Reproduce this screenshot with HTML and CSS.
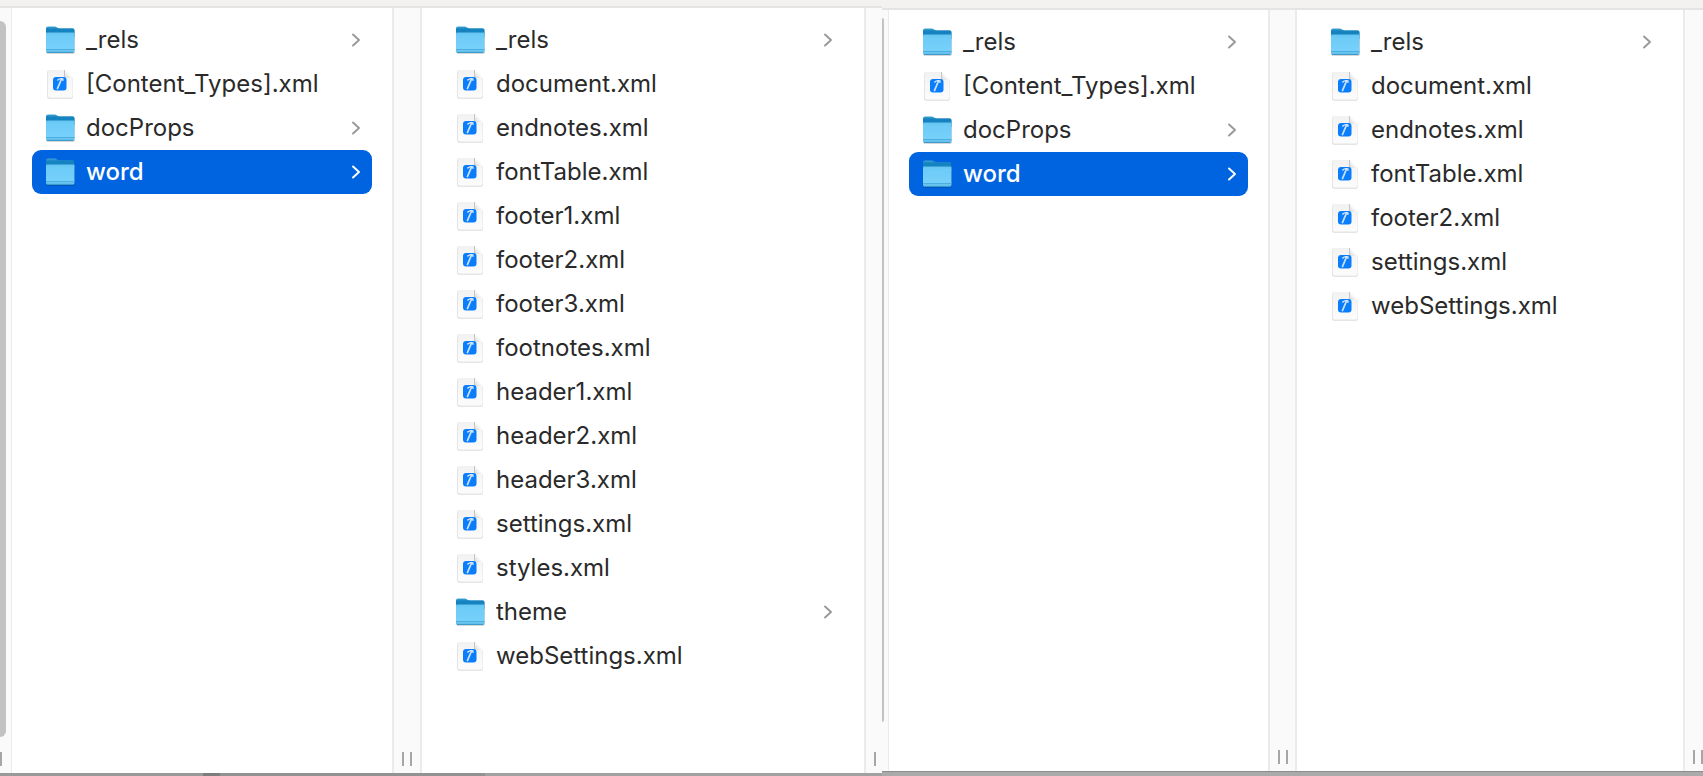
FILE: index.html
```html
<!DOCTYPE html>
<html lang="en">
<head>
<meta charset="utf-8">
<meta name="viewport" content="width=device-width, initial-scale=1">
<title>Package contents</title>
<link rel="stylesheet" href="styles.css">
</head>
<body>
<svg class="defs" width="0" height="0" aria-hidden="true">
  <defs>
    <linearGradient id="tab" x1="0" y1="0" x2="0" y2="1"><stop offset="0" stop-color="#41a4d6"/><stop offset=".25" stop-color="#1583bf"/><stop offset="1" stop-color="#1583bf"/></linearGradient>
    <linearGradient id="front" x1="0" y1="0" x2="0" y2="1"><stop offset="0" stop-color="#66c4f0"/><stop offset=".15" stop-color="#6dcbf7"/><stop offset=".8" stop-color="#76d0fa"/><stop offset="1" stop-color="#5db9e6"/></linearGradient>
    <linearGradient id="sheet" x1="0" y1="0" x2="0" y2="1"><stop offset="0" stop-color="#f2f2f2"/><stop offset="1" stop-color="#fcfcfc"/></linearGradient>
    <linearGradient id="fold" x1="0" y1="1" x2="1" y2="0"><stop offset="0" stop-color="#d4d4d4"/><stop offset=".5" stop-color="#fafafa"/></linearGradient>
  </defs>
  <symbol id="folder" viewBox="0 0 30 30">
    <rect x="1" y="4" width="29" height="25" rx="2" fill="#000" opacity=".16"/>
    <path d="M1 3.5Q1 1.5 3 1.5H9.5Q11 1.5 12 2.4Q13 3.2 14.500 3.200H27.500Q29.500 3.200 29.500 5V12H1Z" fill="url(#tab)"/>
    <path d="M1 8.500Q1 7.500 2 7.500H28.500Q29.500 7.500 29.500 8.500V26Q29.500 27.500 28 27.500H2.500Q1 27.500 1 26Z" fill="url(#front)"/>
    <path d="M1 24.500H29.500" stroke="#4cafdf" stroke-width="1"/>
    <path d="M2 27.500H28.500" stroke="#3a9ccd" stroke-width="1"/>
  </symbol>
  <symbol id="file" viewBox="0 0 30 30">
    <path d="M2 4Q2 1 4.500 1H19.500L28 9.500V27.500Q28 30 25.500 30H4.500Q2 30 2 27.500Z" fill="#000" opacity=".1"/>
    <path d="M3 3Q3 1 5 1H19.500L27.500 9V26.500Q27.500 28.500 25.500 28.500H5Q3 28.500 3 26.500Z" fill="url(#sheet)"/>
    <path d="M19.500 1L27.500 9H19.500Z" fill="url(#fold)"/>
    <path d="M19.500 8.500V1" stroke="#c5c5c5" stroke-width="1"/>
    <rect x="8" y="8" width="13.500" height="13.500" rx="3" fill="#0a7dfa"/>
    <path d="M16.500 10L12.500 19.500" stroke="#c9e1fb" stroke-width="1.800" stroke-linecap="round"/>
    <path d="M12.800 11Q14.500 9.300 17.800 9.800L18 11.300" fill="none" stroke="#e4f0fd" stroke-width="1.300" stroke-linecap="round"/>
  </symbol>
  <symbol id="chevron" viewBox="0 0 10 14">
    <path d="M2 1.500L8 7L2 12.500" fill="none" stroke="currentColor" stroke-width="1.900" stroke-linecap="round" stroke-linejoin="round"/>
  </symbol>
</svg>

<main class="windows">
  <section class="window window-full" aria-label="Full package">
    <div class="toolbar"></div>
    <div class="columns">
      <div class="gutter gutter-start"><span class="scrollbar"></span><span class="grip grip-half"></span></div>
      <ul class="column">
        <li><button class="row"><svg class="icon"><use href="#folder"/></svg><span class="name">_rels</span><svg class="chevron"><use href="#chevron"/></svg></button></li>
        <li><button class="row"><svg class="icon"><use href="#file"/></svg><span class="name">[Content_Types].xml</span></button></li>
        <li><button class="row"><svg class="icon"><use href="#folder"/></svg><span class="name">docProps</span><svg class="chevron"><use href="#chevron"/></svg></button></li>
        <li><button class="row selected"><svg class="icon"><use href="#folder"/></svg><span class="name">word</span><svg class="chevron"><use href="#chevron"/></svg></button></li>
      </ul>
      <div class="gutter"><span class="grip"></span></div>
      <ul class="column">
        <li><button class="row"><svg class="icon"><use href="#folder"/></svg><span class="name">_rels</span><svg class="chevron"><use href="#chevron"/></svg></button></li>
        <li><button class="row"><svg class="icon"><use href="#file"/></svg><span class="name">document.xml</span></button></li>
        <li><button class="row"><svg class="icon"><use href="#file"/></svg><span class="name">endnotes.xml</span></button></li>
        <li><button class="row"><svg class="icon"><use href="#file"/></svg><span class="name">fontTable.xml</span></button></li>
        <li><button class="row"><svg class="icon"><use href="#file"/></svg><span class="name">footer1.xml</span></button></li>
        <li><button class="row"><svg class="icon"><use href="#file"/></svg><span class="name">footer2.xml</span></button></li>
        <li><button class="row"><svg class="icon"><use href="#file"/></svg><span class="name">footer3.xml</span></button></li>
        <li><button class="row"><svg class="icon"><use href="#file"/></svg><span class="name">footnotes.xml</span></button></li>
        <li><button class="row"><svg class="icon"><use href="#file"/></svg><span class="name">header1.xml</span></button></li>
        <li><button class="row"><svg class="icon"><use href="#file"/></svg><span class="name">header2.xml</span></button></li>
        <li><button class="row"><svg class="icon"><use href="#file"/></svg><span class="name">header3.xml</span></button></li>
        <li><button class="row"><svg class="icon"><use href="#file"/></svg><span class="name">settings.xml</span></button></li>
        <li><button class="row"><svg class="icon"><use href="#file"/></svg><span class="name">styles.xml</span></button></li>
        <li><button class="row"><svg class="icon"><use href="#folder"/></svg><span class="name">theme</span><svg class="chevron"><use href="#chevron"/></svg></button></li>
        <li><button class="row"><svg class="icon"><use href="#file"/></svg><span class="name">webSettings.xml</span></button></li>
      </ul>
      <div class="gutter gutter-end"><span class="grip grip-half"></span></div>
    </div>
    <div class="edge"></div>
  </section>

  <section class="window window-reduced" aria-label="Reduced package">
    <div class="toolbar"></div>
    <div class="columns">
      <div class="gutter gutter-start"><span class="scrollbar"></span></div>
      <ul class="column">
        <li><button class="row"><svg class="icon"><use href="#folder"/></svg><span class="name">_rels</span><svg class="chevron"><use href="#chevron"/></svg></button></li>
        <li><button class="row"><svg class="icon"><use href="#file"/></svg><span class="name">[Content_Types].xml</span></button></li>
        <li><button class="row"><svg class="icon"><use href="#folder"/></svg><span class="name">docProps</span><svg class="chevron"><use href="#chevron"/></svg></button></li>
        <li><button class="row selected"><svg class="icon"><use href="#folder"/></svg><span class="name">word</span><svg class="chevron"><use href="#chevron"/></svg></button></li>
      </ul>
      <div class="gutter"><span class="grip"></span></div>
      <ul class="column">
        <li><button class="row"><svg class="icon"><use href="#folder"/></svg><span class="name">_rels</span><svg class="chevron"><use href="#chevron"/></svg></button></li>
        <li><button class="row"><svg class="icon"><use href="#file"/></svg><span class="name">document.xml</span></button></li>
        <li><button class="row"><svg class="icon"><use href="#file"/></svg><span class="name">endnotes.xml</span></button></li>
        <li><button class="row"><svg class="icon"><use href="#file"/></svg><span class="name">fontTable.xml</span></button></li>
        <li><button class="row"><svg class="icon"><use href="#file"/></svg><span class="name">footer2.xml</span></button></li>
        <li><button class="row"><svg class="icon"><use href="#file"/></svg><span class="name">settings.xml</span></button></li>
        <li><button class="row"><svg class="icon"><use href="#file"/></svg><span class="name">webSettings.xml</span></button></li>
      </ul>
      <div class="gutter gutter-end"><span class="grip"></span></div>
    </div>
    <div class="edge"></div>
  </section>
</main>
</body>
</html>
```
FILE: styles.css
```css
* { box-sizing: border-box; }

body {
  margin: 0;
  background: #fff;
  color: #2a2a2a;
  font-family: Inter, "Liberation Sans", sans-serif;
  font-size: 24px;
  line-height: 28px;
}

.defs { position: absolute; }

.windows {
  display: grid;
  grid-template-columns: minmax(0, 882fr) minmax(0, 821fr);
  min-height: 100vh;
}

.window {
  display: flex;
  flex-direction: column;
}

.toolbar {
  height: 8px;
  background: #f3f2f0;
  border-bottom: 2px solid #e4e4e4;
}
.window-reduced .toolbar { height: 10px; }

.columns {
  display: grid;
  flex: 1;
  grid-template-columns: 12px minmax(0, 380fr) 30px minmax(0, 442fr) 18px;
}
.window-reduced .columns {
  grid-template-columns: 7px minmax(0, 379fr) 29px minmax(0, 386fr) 20px;
}

.column {
  margin: 0;
  padding: 10px 20px;
  list-style: none;
  background: #fff;
}

.row {
  display: flex;
  align-items: center;
  gap: 11px;
  width: 100%;
  height: 44px;
  padding: 0 11px 0 13px;
  border: 0;
  border-radius: 9px;
  background: none;
  color: inherit;
  font: inherit;
  text-align: left;
}
.row.selected {
  background: #0064e1;
  color: #fff;
  font-weight: 500;
}

.icon {
  flex: none;
  width: 30px;
  height: 30px;
}
.name {
  flex: 1;
  white-space: nowrap;
}
.chevron {
  flex: none;
  width: 10px;
  height: 14px;
  color: #999;
}
.selected .chevron { color: #fff; }

.gutter {
  display: flex;
  flex-direction: column;
  justify-content: flex-end;
  padding: 0 0 7px 8px;
  overflow: hidden;
  background: #fafafa;
  border: solid #ebebeb;
  border-width: 0 2px;
}
.gutter-start {
  padding-left: 0;
  border-width: 0 1px 0 0;
}
.gutter-end { border-right: 0; }

.scrollbar {
  flex: 1;
  width: 6px;
  margin: 13px 0 15px;
  border-radius: 0 6px 6px 0;
  background: #c2c2c2;
}
.window-reduced .scrollbar {
  width: 2px;
  margin: 8px 0 42px;
  border-radius: 0 2px 2px 0;
}

.grip {
  flex: none;
  width: 10px;
  height: 14px;
  border: solid #a6a6a6;
  border-width: 0 2px;
}
.grip-half {
  width: 2px;
  border-right: 0;
}

.edge {
  height: 3px;
  background: linear-gradient(90deg, #999 0 23%, #7d7d7d 23% 25%, #929292 25% 55%, #a1a1a1 55%);
}
.window-reduced .edge {
  height: 5px;
  background: #aaa;
  border-top: 1px solid #8c8c8c;
}
```
